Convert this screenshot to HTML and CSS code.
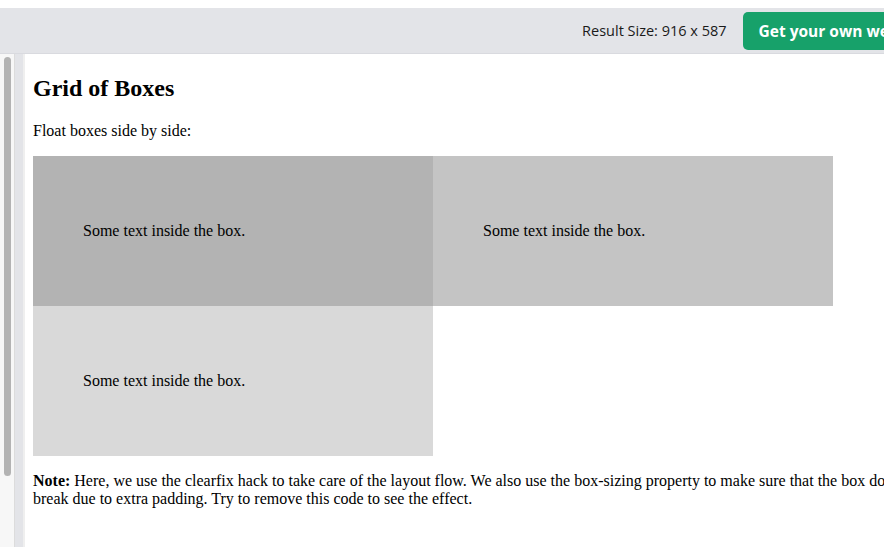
FILE: index.html
```html
<!DOCTYPE html>
<html>
<head>
<meta charset="utf-8">
<link rel="stylesheet" href="styles.css">
</head>
<body>
<div class="top-gap"></div>
<header class="topbar">
  <span class="result-size">Result Size: 916 x 587</span>
  <a class="get-btn">Get your own website</a>
</header>
<div class="main">
  <div class="left-panel">
    <div class="scroll-track"><div class="scroll-thumb"></div></div>
  </div>
  <div class="divider"></div>
  <div class="result">
    <h2 class="title">Grid of Boxes</h2>
    <p class="text">Float boxes side by side:</p>
    <div class="grid">
      <div class="box box1"><p class="text">Some text inside the box.</p></div>
      <div class="box box2"><p class="text">Some text inside the box.</p></div>
      <div class="box box3"><p class="text">Some text inside the box.</p></div>
    </div>
    <p class="text"><strong>Note:</strong> Here, we use the clearfix hack to take care of the layout flow. We also use the box-sizing property to make sure that the box doesn't break due to extra padding. Try to remove this code to see the effect.</p>
  </div>
</div>
</body>
</html>
```

FILE: styles.css
```css
html, body {
  margin: 0;
  padding: 0;
  overflow: hidden;
  height: 547px;
  background: #ffffff;
}
.top-gap {
  height: 8px;
  background: #ffffff;
}
.topbar {
  height: 46px;
  width: 945px;
  background: #e3e4e8;
  display: flex;
  align-items: center;
  justify-content: flex-end;
  gap: 16px;
  box-sizing: border-box;
  border-bottom: 1px solid #d9dadf;
}
.result-size {
  font-family: "Open Sans", sans-serif;
  font-size: 14.5px;
  color: #1a1a1a;
}
.get-btn {
  display: flex;
  align-items: center;
  height: 38px;
  padding: 0 16px;
  border-radius: 5px;
  background: #17a16a;
  color: #ffffff;
  font-family: "Open Sans", sans-serif;
  font-weight: 700;
  font-size: 15.5px;
  white-space: nowrap;
  margin-top: 1px;
  margin-right: 2px;
}
.main {
  display: flex;
  height: 493px;
}
.left-panel {
  width: 14px;
  background: #f7f7f7;
  border-right: 1px solid #dcdcdc;
  flex-shrink: 0;
  padding-top: 3px;
  box-sizing: content-box;
}
.scroll-track {
  display: flex;
  justify-content: center;
  padding-left: 1px;
}
.scroll-thumb {
  width: 7px;
  height: 419px;
  border-radius: 4px;
  background: #b3b3b3;
}
.divider {
  width: 8px;
  background: #e3e4e8;
  border-right: 2px solid #efefef;
  flex-shrink: 0;
}
.result {
  width: 900px;
  flex-shrink: 0;
  padding: 0 8px;
  font-family: "Liberation Serif", serif;
  font-size: 16px;
  color: #000000;
}
.title {
  font-size: 24px;
  font-weight: 700;
  margin: 21px 0 20px;
}
.text {
  margin: 16px 0;
  line-height: 18px;
}
.grid {
  display: grid;
  grid-template-columns: 400px 400px;
}
.box {
  height: 150px;
  padding: 50px;
  box-sizing: border-box;
}
.box1 { background: #b3b3b3; }
.box2 { background: #c4c4c4; }
.box3 { background: #d9d9d9; }
```
